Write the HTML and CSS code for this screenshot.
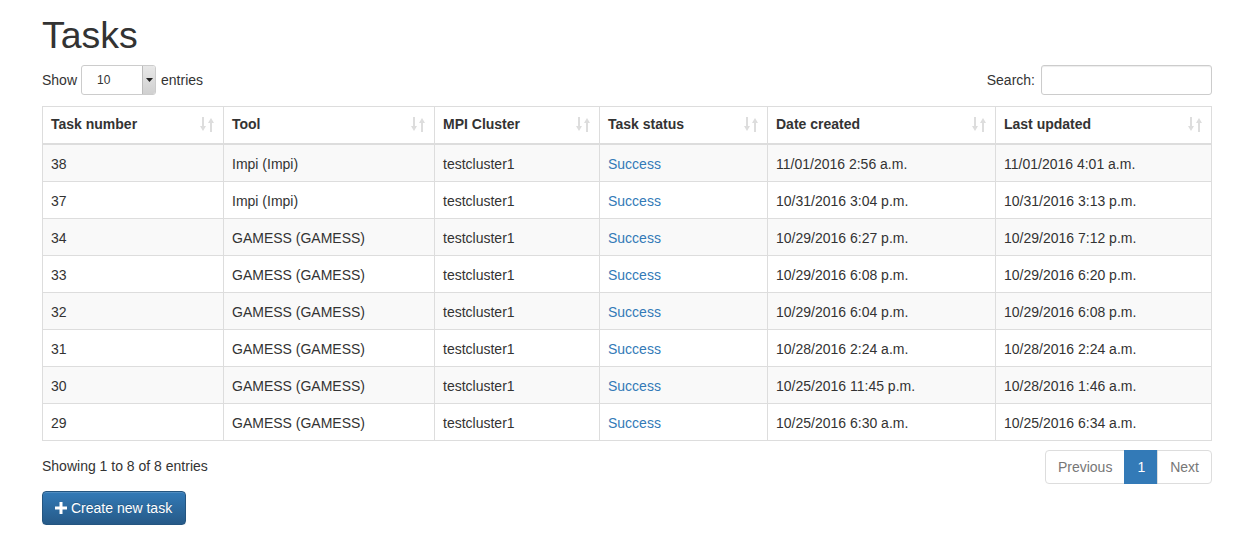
FILE: index.html
```html
<!DOCTYPE html>
<html>
<head>
<meta charset="utf-8">
<link rel="stylesheet" href="styles.css">
</head>
<body>
<div class="page">
  <h1 class="title">Tasks</h1>
  <div class="controls">
    <label class="length">Show
      <span class="select"><span class="sel-val">10</span><span class="sel-arrow"><svg width="7" height="4" viewBox="0 0 7 4"><path d="M0 0h7L3.5 4z" fill="#222"/></svg></span></span>
      entries</label>
    <label class="search">Search: <span class="input"></span></label>
  </div>
  <table class="tbl">
    <colgroup>
      <col class="c1"><col class="c2"><col class="c3"><col class="c4"><col class="c5"><col class="c6">
    </colgroup>
    <thead>
      <tr>
        <th>Task number<span class="sort"></span></th>
        <th>Tool<span class="sort"></span></th>
        <th>MPI Cluster<span class="sort"></span></th>
        <th>Task status<span class="sort"></span></th>
        <th>Date created<span class="sort"></span></th>
        <th>Last updated<span class="sort"></span></th>
      </tr>
    </thead>
    <tbody>
      <tr><td>38</td><td>Impi (Impi)</td><td>testcluster1</td><td><a>Success</a></td><td>11/01/2016 2:56 a.m.</td><td>11/01/2016 4:01 a.m.</td></tr>
      <tr><td>37</td><td>Impi (Impi)</td><td>testcluster1</td><td><a>Success</a></td><td>10/31/2016 3:04 p.m.</td><td>10/31/2016 3:13 p.m.</td></tr>
      <tr><td>34</td><td>GAMESS (GAMESS)</td><td>testcluster1</td><td><a>Success</a></td><td>10/29/2016 6:27 p.m.</td><td>10/29/2016 7:12 p.m.</td></tr>
      <tr><td>33</td><td>GAMESS (GAMESS)</td><td>testcluster1</td><td><a>Success</a></td><td>10/29/2016 6:08 p.m.</td><td>10/29/2016 6:20 p.m.</td></tr>
      <tr><td>32</td><td>GAMESS (GAMESS)</td><td>testcluster1</td><td><a>Success</a></td><td>10/29/2016 6:04 p.m.</td><td>10/29/2016 6:08 p.m.</td></tr>
      <tr><td>31</td><td>GAMESS (GAMESS)</td><td>testcluster1</td><td><a>Success</a></td><td>10/28/2016 2:24 a.m.</td><td>10/28/2016 2:24 a.m.</td></tr>
      <tr><td>30</td><td>GAMESS (GAMESS)</td><td>testcluster1</td><td><a>Success</a></td><td>10/25/2016 11:45 p.m.</td><td>10/28/2016 1:46 a.m.</td></tr>
      <tr><td>29</td><td>GAMESS (GAMESS)</td><td>testcluster1</td><td><a>Success</a></td><td>10/25/2016 6:30 a.m.</td><td>10/25/2016 6:34 a.m.</td></tr>
    </tbody>
  </table>
  <div class="footer">
    <div class="info">Showing 1 to 8 of 8 entries</div>
    <ul class="pager">
      <li class="pg">Previous</li>
      <li class="pg active">1</li>
      <li class="pg">Next</li>
    </ul>
  </div>
  <button class="btn"><svg width="12" height="12" viewBox="0 0 12 12"><path d="M4.5 0h3v4.5H12v3H7.5V12h-3V7.5H0v-3h4.5z" fill="#fff"/></svg>Create new task</button>
</div>
</body>
</html>
```
FILE: styles.css
```css
* { box-sizing: border-box; }
html, body { margin: 0; padding: 0; background: #fff; }
body {
  font-family: "Liberation Sans", Arial, Helvetica, sans-serif;
  font-size: 14px;
  line-height: 20px;
  color: #333;
}
.page { width: 1170px; margin-left: 42px; }
.title {
  font-size: 37.5px;
  font-weight: 500;
  line-height: 40px;
  margin: 15px 0 0 0;
  height: 50px;
}
.controls {
  display: flex;
  justify-content: space-between;
  align-items: center;
  height: 30px;
}
.length, .search { display: flex; align-items: center; font-weight: normal; line-height: 18px; }
.select {
  display: inline-flex;
  width: 75px;
  height: 30px;
  margin: 0 5px 0 4px;
  border: 1px solid #ccc;
  border-radius: 3px;
  overflow: hidden;
  font-size: 12px;
}
.sel-val { flex: 1; padding-left: 15px; line-height: 28px; color: #333; }
.sel-arrow {
  width: 13px;
  background: linear-gradient(#e8e8e8, #d0d0d0);
  border-left: 1px solid #bbb;
  display: flex; align-items: center; justify-content: center;
}
.input {
  display: inline-block;
  width: 171px;
  height: 30px;
  margin-left: 6px;
  border: 1px solid #ccc;
  border-radius: 3px;
  box-shadow: inset 0 1px 1px rgba(0,0,0,.075);
}
.tbl {
  margin-top: 11px;
  width: 1170px;
  border-collapse: collapse;
  border: 1px solid #ddd;
  table-layout: fixed;
}
.c1 { width: 181px; }
.c2 { width: 211px; }
.c3 { width: 165px; }
.c4 { width: 168px; }
.c5 { width: 228px; }
.c6 { width: 216px; }
.tbl th, .tbl td {
  border: 1px solid #ddd;
  padding: 9px 8px 7px 8px;
  text-align: left;
  vertical-align: top;
  line-height: 20px;
}
.tbl th {
  position: relative;
  font-weight: bold;
  padding: 7px 30px 9px 8px;
  border-bottom: 2px solid #ddd;
}
.tbl tbody tr:nth-child(odd) td { background: #f9f9f9; }
.tbl a { color: #337ab7; }
.sort {
  position: absolute;
  right: 9px;
  top: 10px;
  width: 14px;
  height: 15px;
  background:
    linear-gradient(#ddd,#ddd) 2px 0 / 2px 10px no-repeat,
    linear-gradient(#ddd,#ddd) 10px 5px / 2px 10px no-repeat;
}
.sort::before, .sort::after {
  content: "";
  position: absolute;
  width: 0; height: 0;
  border-left: 3px solid transparent;
  border-right: 3px solid transparent;
}
.sort::before { left: 0; top: 9px; border-top: 5px solid #ddd; }
.sort::after { left: 8px; top: 1px; border-bottom: 5px solid #ddd; }
.footer {
  display: flex;
  justify-content: space-between;
  align-items: flex-start;
  margin-top: 9px;
  height: 40px;
}
.info { padding-top: 6px; }
.pager {
  list-style: none;
  margin: 0;
  padding: 0;
  display: flex;
}
.pg {
  padding: 6px 12px;
  line-height: 20px;
  border: 1px solid #ddd;
  margin-left: -1px;
  color: #777;
  background: #fff;
}
.pg:first-child { border-radius: 4px 0 0 4px; }
.pg:last-child { border-radius: 0 4px 4px 0; }
.pg.active { background: #337ab7; border-color: #337ab7; color: #fff; }
.btn {
  display: inline-flex;
  align-items: center;
  gap: 4px;
  margin-top: 1px;
  height: 34px;
  width: 144px;
  padding: 6px 12px;
  font-family: inherit;
  font-size: 14px;
  line-height: 20px;
  color: #fff;
  border: 1px solid #245580;
  border-radius: 4px;
  background: linear-gradient(#337ab7, #265a88);
  text-shadow: 0 -1px 0 rgba(0,0,0,.2);
  box-shadow: inset 0 1px 0 rgba(255,255,255,.15), 0 1px 1px rgba(0,0,0,.075);
}
```
